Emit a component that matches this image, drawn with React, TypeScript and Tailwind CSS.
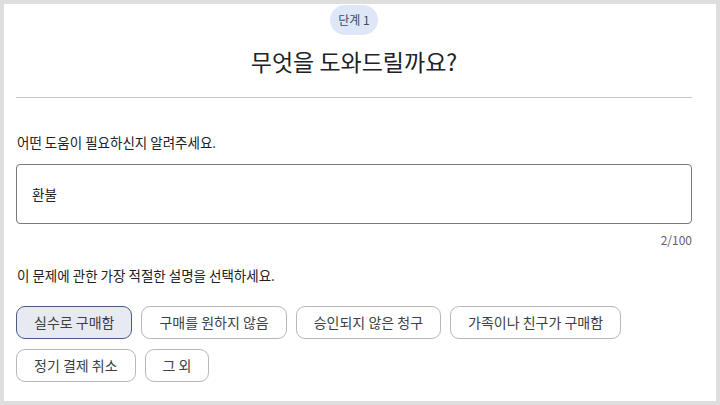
import React, { useState } from 'react';

const reasons = [
    '실수로 구매함',
    '구매를 원하지 않음',
    '승인되지 않은 청구',
    '가족이나 친구가 구매함',
    '정기 결제 취소',
    '그 외',
];

export default function App() {
    const [selected, setSelected] = useState(0);
    const [text, setText] = useState('환불');

    return (
        <div
            className="w-[720px] h-[405px] bg-white border-4 border-[#dedede] overflow-hidden text-[#202124]"
            style={{ fontFamily: '"Noto Sans CJK KR", "Noto Sans", sans-serif' }}
        >
            <div className="pl-[12px] pr-[24px] flex flex-col">
                {/* 헤더 */}
                <div className="flex justify-center pt-[1px]">
                    <span className="h-[30px] px-[8px] rounded-full bg-[#dde7f8] text-[#3b4a6b] text-[12px] leading-[30px]">
                        단계 1
                    </span>
                </div>
                <h1 className="text-center text-[23px] leading-[30px] mt-[11px]">무엇을 도와드릴까요?</h1>
                <div className="h-px bg-[#c6c6c6] mt-[21px]" />

                {/* 설명 입력 */}
                <p className="text-[13.5px] leading-[20px] mt-[34px] pl-[1px]">어떤 도움이 필요하신지 알려주세요.</p>
                <div className="mt-[12px] h-[60px] border border-[#7a7a7a] rounded-[4px] flex items-center px-[15px]">
                    <input
                        value={text}
                        onChange={(e) => setText(e.target.value)}
                        maxLength={100}
                        className="w-full outline-none text-[13.5px] bg-transparent"
                    />
                </div>
                <div className="text-right text-[12px] leading-[16px] text-[#5f6368] mt-[8px]">{text.length}/100</div>

                {/* 사유 선택 */}
                <p className="text-[13.5px] leading-[20px] mt-[17px] pl-[1px]">이 문제에 관한 가장 적절한 설명을 선택하세요.</p>
                <div className="flex flex-wrap gap-x-[9px] gap-y-[10px] mt-[21px]">
                    {reasons.map((r, i) => (
                        <button
                            key={r}
                            onClick={() => setSelected(i)}
                            className={
                                i === selected
                                    ? 'h-[33px] px-[17px] rounded-[9px] border border-[#4a5b86] bg-[#e7eaf0] text-[14px] text-[#3c4043]'
                                    : 'h-[33px] px-[17px] rounded-[9px] border border-[#b8b8b8] bg-white text-[14px] text-[#3c4043]'
                            }
                        >
                            {r}
                        </button>
                    ))}
                </div>
            </div>
        </div>
    );
}
